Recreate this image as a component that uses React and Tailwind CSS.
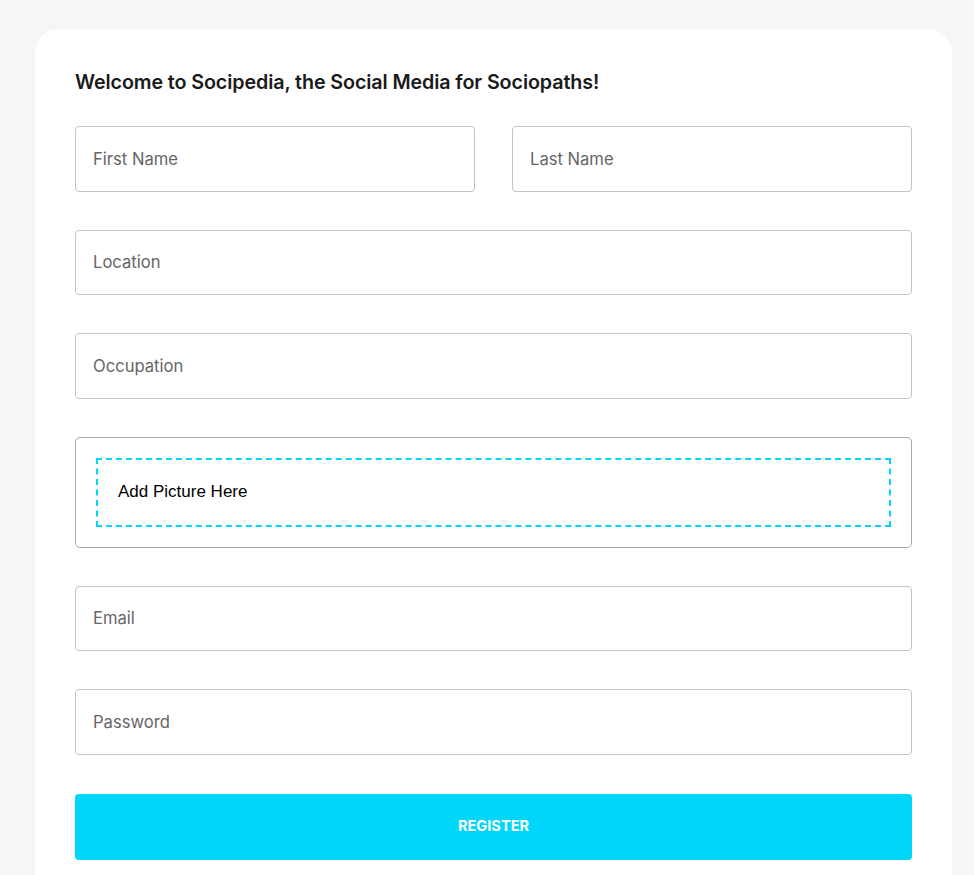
import React from 'react';

const font = { fontFamily: 'Inter, "Noto Sans", sans-serif' };

const Field = ({ label, type = 'text' }) => (
  <input
    type={type}
    placeholder={label}
    className="w-full h-[65.5px] px-[17px] rounded-[4px] border border-[#c4c4c4] bg-white text-[16.6px] text-[#333] placeholder:text-[#666] outline-none"
  />
);

export default function App() {
  return (
    <div className="min-h-[875px] bg-[#f6f6f6] pt-[29px] pl-[35px] pr-[22px] overflow-hidden" style={font}>
      <div className="bg-white rounded-t-[24px] px-[40px] pt-[40px] pb-[40px] h-[846px]">
        <h1 className="text-[19.7px] font-semibold text-[#1a1a1a] leading-[26px] tracking-[-0.1px]">
          Welcome to Socipedia, the Social Media for Sociopaths!
        </h1>

        <form className="mt-[31px] flex flex-col gap-[38px]">
          <div className="grid grid-cols-2 gap-[37px]">
            <Field label="First Name" />
            <Field label="Last Name" />
          </div>
          <Field label="Location" />
          <Field label="Occupation" />

          {/* picture dropzone */}
          <div className="border border-[#a9a9a9] rounded-[5px] p-[20px]">
            <div className="border-2 border-dashed border-[#00d5fa] h-[69px] flex items-center px-[20px]">
              <p className="text-[17px] text-black" style={{ fontFamily: '"Liberation Sans", Arial, sans-serif' }}>
                Add Picture Here
              </p>
            </div>
          </div>

          <Field label="Email" />
          <Field label="Password" type="password" />

          <button
            type="button"
            className="h-[66px] mt-[1.5px] w-full rounded-[4px] bg-[#00d5fa] text-white text-[14.6px] font-bold uppercase"
          >
            Register
          </button>
        </form>
      </div>
    </div>
  );
}
